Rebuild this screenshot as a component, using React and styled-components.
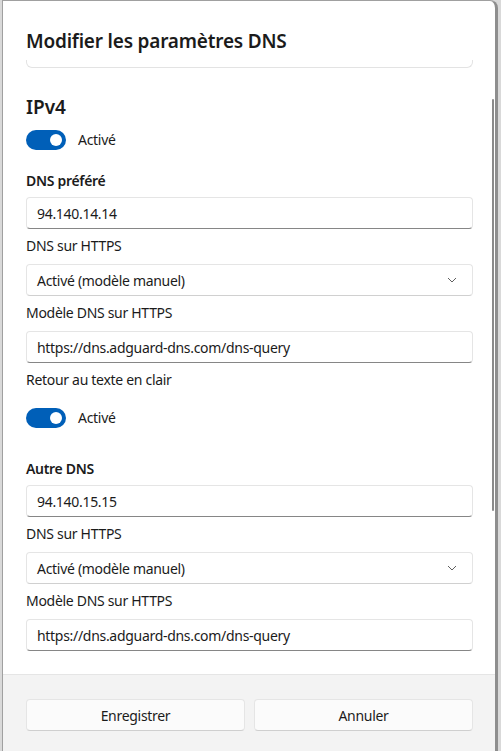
import styled, { createGlobalStyle } from "styled-components";

const GlobalStyle = createGlobalStyle`
  html, body {
    margin: 0;
    padding: 0;
    background: #d9d9d9;
  }
  body {
    font-family: "Noto Sans", "Open Sans", sans-serif;
    color: #1b1b1b;
  }
`;

const Dialog = styled.div`
  position: relative;
  margin-left: 2px;
  width: 496px;
  height: 751px;
  box-sizing: border-box;
  background: #ffffff;
  border-left: 1px solid #a0a0a0;
  border-top: 1px solid #a0a0a0;
  border-right: 3px solid #8e8e8e;
  border-top-right-radius: 8px;
  display: flex;
  flex-direction: column;
  overflow: hidden;
`;

const Header = styled.div`
  padding: 26px 22px 0 23px;
  height: 33px;
`;

const Title = styled.h1`
  margin: 0;
  font-size: 19px;
  line-height: 28px;
  font-weight: 600;
  letter-spacing: -0.2px;
`;

const Body = styled.div`
  flex: 1;
  padding: 0 22px 0 23px;
  overflow: hidden;
  letter-spacing: -0.3px;
`;

/* bottom of the card that has scrolled out of view */
const CardTail = styled.div`
  height: 7px;
  border: 1px solid #e3e3e3;
  border-top: none;
  border-radius: 0 0 6px 6px;
`;

const Scrollbar = styled.div`
  position: absolute;
  right: 1px;
  top: 98px;
  width: 2px;
  height: 412px;
  border-radius: 1px;
  background: #8a8a8a;
`;

const Heading = styled.h2`
  margin: 25px 0 0;
  font-size: 19px;
  line-height: 28px;
  font-weight: 600;
  letter-spacing: 0;
`;

const Label = styled.div`
  margin-top: ${(p) => p.$top ?? 7}px;
  margin-bottom: ${(p) => (p.$bold ? -2 : 0)}px;
  font-size: 14px;
  line-height: 20px;
  font-weight: ${(p) => (p.$bold ? 600 : 400)};
`;

const ToggleRow = styled.div`
  display: flex;
  align-items: center;
  gap: 12px;
  margin-top: ${(p) => p.$top}px;
  font-size: 14px;
  line-height: 20px;
`;

const Track = styled.span`
  position: relative;
  width: 40px;
  height: 20px;
  border-radius: 10px;
  background: #005fb8;
  &::after {
    content: "";
    position: absolute;
    top: 4px;
    right: 4px;
    width: 12px;
    height: 12px;
    border-radius: 50%;
    background: #ffffff;
  }
`;

const Field = styled.div`
  margin-top: 8px;
  height: 32px;
  box-sizing: border-box;
  display: flex;
  align-items: center;
  justify-content: space-between;
  padding: 0 15px 0 10px;
  background: #ffffff;
  border: 1px solid #e5e5e5;
  border-bottom-color: ${(p) => (p.$select ? "#d0d0d0" : "#868686")};
  border-radius: 4px;
  font-size: 14px;
`;

const Footer = styled.div`
  height: 77px;
  box-sizing: border-box;
  padding: 24px 22px 0 23px;
  background: #f3f3f3;
  border-top: 1px solid #e5e5e5;
  display: grid;
  grid-template-columns: 1fr 1fr;
  gap: 9px;
  align-items: start;
`;

const Button = styled.button`
  height: 32px;
  background: #fbfbfb;
  border: 1px solid #e5e5e5;
  border-bottom-color: #cfcfcf;
  border-radius: 4px;
  font-family: inherit;
  font-size: 14px;
  letter-spacing: -0.3px;
  color: #1b1b1b;
`;

function Chevron() {
  return (
    <svg width="10" height="6" viewBox="0 0 10 6">
      <path d="M1 1l4 4 4-4" fill="none" stroke="#606060" strokeWidth="1" />
    </svg>
  );
}

function DnsBlock({ title, address, top }) {
  return (
    <>
      <Label $bold $top={top}>{title}</Label>
      <Field>{address}</Field>
      <Label>DNS sur HTTPS</Label>
      <Field $select>
        <span>Activé (modèle manuel)</span>
        <Chevron />
      </Field>
      <Label>Modèle DNS sur HTTPS</Label>
      <Field>https://dns.adguard-dns.com/dns-query</Field>
    </>
  );
}

export default function App() {
  return (
    <>
      <GlobalStyle />
      <Dialog>
        <Header>
          <Title>Modifier les paramètres DNS</Title>
        </Header>
        <Body>
          <CardTail />
          <Heading>IPv4</Heading>
          <ToggleRow $top={9}>
            <Track />
            Activé
          </ToggleRow>
          <DnsBlock title="DNS préféré" address="94.140.14.14" top={21} />
          <Label>Retour au texte en clair</Label>
          <ToggleRow $top={18}>
            <Track />
            Activé
          </ToggleRow>
          <DnsBlock title="Autre DNS" address="94.140.15.15" top={31} />
        </Body>
        <Scrollbar />
        <Footer>
          <Button>Enregistrer</Button>
          <Button>Annuler</Button>
        </Footer>
      </Dialog>
    </>
  );
}
